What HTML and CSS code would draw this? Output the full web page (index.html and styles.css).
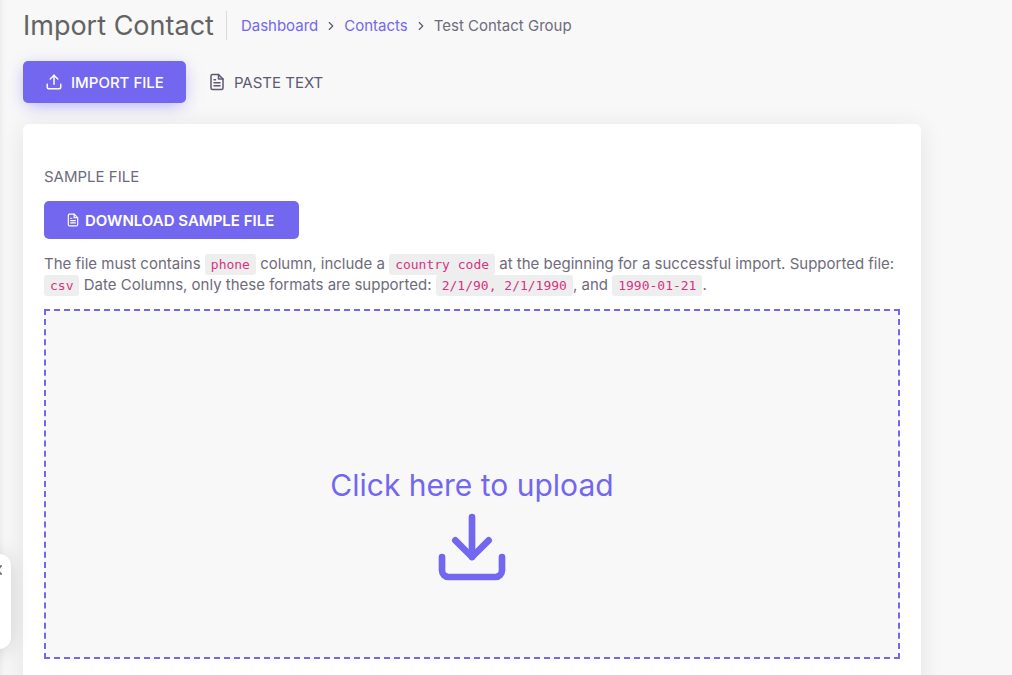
FILE: index.html
```html
<!DOCTYPE html>
<html lang="en">
<head>
    <meta charset="UTF-8">
    <meta name="viewport" content="width=device-width, initial-scale=1.0">
    <title>Import Contact</title>
    <link rel="stylesheet" href="styles.css">
</head>
<body>
    <main class="content">
        <header class="content-header">
            <h1 class="page-title">Import Contact</h1>
            <nav class="breadcrumb" aria-label="Breadcrumb">
                <a href="#">Dashboard</a>
                <svg class="chevron" viewBox="0 0 24 24"><polyline points="9 18 15 12 9 6"/></svg>
                <a href="#">Contacts</a>
                <svg class="chevron" viewBox="0 0 24 24"><polyline points="9 18 15 12 9 6"/></svg>
                <span>Test Contact Group</span>
            </nav>
        </header>

        <div class="tabs">
            <button type="button" class="tab active">
                <svg class="icon" viewBox="0 0 24 24">
                    <path d="M21 15v4a2 2 0 0 1-2 2H5a2 2 0 0 1-2-2v-4"/>
                    <polyline points="17 8 12 3 7 8"/>
                    <line x1="12" y1="3" x2="12" y2="15"/>
                </svg>
                IMPORT FILE
            </button>
            <button type="button" class="tab">
                <svg class="icon" viewBox="0 0 24 24">
                    <path d="M14 2H6a2 2 0 0 0-2 2v16a2 2 0 0 0 2 2h12a2 2 0 0 0 2-2V8z"/>
                    <polyline points="14 2 14 8 20 8"/>
                    <line x1="16" y1="13" x2="8" y2="13"/>
                    <line x1="16" y1="17" x2="8" y2="17"/>
                    <polyline points="10 9 9 9 8 9"/>
                </svg>
                PASTE TEXT
            </button>
        </div>

        <section class="card">
            <p class="label">SAMPLE FILE</p>
            <a href="#" class="btn">
                <svg class="icon-sm" viewBox="0 0 24 24">
                    <path d="M14 2H6a2 2 0 0 0-2 2v16a2 2 0 0 0 2 2h12a2 2 0 0 0 2-2V8z"/>
                    <polyline points="14 2 14 8 20 8"/>
                    <line x1="16" y1="13" x2="8" y2="13"/>
                    <line x1="16" y1="17" x2="8" y2="17"/>
                    <polyline points="10 9 9 9 8 9"/>
                </svg>
                DOWNLOAD SAMPLE FILE
            </a>
            <p class="help">
                The file must contains <code>phone</code> column, include a <code>country code</code> at the beginning for a successful import. Supported file: <code>csv</code> Date Columns, only these formats are supported: <code>2/1/90, 2/1/1990</code>, and <code>1990-01-21</code>.
            </p>
            <label class="dropzone" for="file">
                <span>Click here to upload</span>
                <svg class="icon-lg" viewBox="0 0 24 24">
                    <path d="M21 15v4a2 2 0 0 1-2 2H5a2 2 0 0 1-2-2v-4"/>
                    <polyline points="7 10 12 15 17 10"/>
                    <line x1="12" y1="15" x2="12" y2="3"/>
                </svg>
                <input type="file" id="file" class="file-input" accept=".csv">
            </label>
        </section>
    </main>

    <!-- widget handle on the left edge -->
    <button type="button" class="side-handle" aria-label="Close">
        <svg viewBox="0 0 10 10"><path d="M1 1l8 8M9 1l-8 8"/></svg>
    </button>
</body>
</html>
```
FILE: styles.css
```css
* {
    box-sizing: border-box;
}

body {
    margin: 0;
    min-height: 100vh;
    background-color: #f8f8f8;
    color: #6e6b7b;
    font-family: Inter, "Open Sans", sans-serif;
    font-size: 15px;
    line-height: 21px;
    box-shadow: inset 6px 0 6px -6px rgba(34, 41, 47, 0.1);
}

a {
    color: #7367f0;
    text-decoration: none;
}

svg {
    fill: none;
    stroke: currentColor;
    stroke-width: 2;
    stroke-linecap: round;
    stroke-linejoin: round;
    flex-shrink: 0;
}

.content {
    padding: 11px 91px 0 23px;
}

.content-header {
    display: flex;
    align-items: center;
}

.page-title {
    margin: 0;
    padding-right: 12px;
    border-right: 1px solid #d6dce1;
    color: #636363;
    font-size: 27px;
    font-weight: 400;
    line-height: 29px;
}

.breadcrumb {
    display: flex;
    align-items: center;
    gap: 6px;
    padding-left: 14px;
}

.chevron {
    width: 14px;
    height: 14px;
    color: #5e5873;
}

.tabs {
    display: flex;
    margin: 21px 0;
}

.tab {
    display: flex;
    align-items: center;
    gap: 8px;
    height: 42px;
    padding: 0 22px;
    border: 0;
    border-radius: 5px;
    background: none;
    color: #5e5873;
    font-family: inherit;
    font-size: 15px;
    cursor: pointer;
}

.tab.active {
    background-color: #7367f0;
    color: #fff;
    font-weight: 500;
    box-shadow: 0 4px 18px -4px rgba(115, 103, 240, 0.65);
}

.icon {
    width: 18px;
    height: 18px;
}

.icon-sm {
    width: 14px;
    height: 14px;
}

.icon-lg {
    width: 80px;
    height: 80px;
}

.card {
    padding: 42px 21px;
    border-radius: 6px;
    background-color: #fff;
    box-shadow: 0 4px 24px 0 rgba(34, 41, 47, 0.1);
}

.label {
    margin: 0 0 14px;
}

.btn {
    display: inline-flex;
    align-items: center;
    gap: 5px;
    height: 38px;
    padding: 0 25px 0 22px;
    border-radius: 5px;
    background-color: #7367f0;
    color: #fff;
    font-weight: 600;
    vertical-align: top;
}

.help {
    margin: 14px 0;
}

code {
    padding: 3px 6px;
    border-radius: 3px;
    background-color: #eee;
    color: #d63384;
    font-family: "DejaVu Sans Mono", monospace;
    font-size: 13px;
    line-height: 1;
}

.dropzone {
    display: flex;
    flex-direction: column;
    align-items: center;
    min-height: 350px;
    padding-top: 152px;
    border: 2px dashed #7367f0;
    background-color: #f8f8f8;
    color: #7367f0;
    font-size: 30px;
    line-height: 44px;
    cursor: pointer;
}

.file-input {
    width: 1px;
    height: 1px;
    opacity: 0;
}

.side-handle {
    position: fixed;
    left: -29px;
    bottom: 26px;
    display: flex;
    justify-content: flex-end;
    width: 40px;
    height: 95px;
    padding: 11px 9px;
    border: 0;
    border-radius: 12px;
    background-color: #fff;
    color: #777;
    box-shadow: 0 2px 20px rgba(0, 0, 0, 0.15);
}

.side-handle svg {
    width: 10px;
    height: 10px;
}
```
